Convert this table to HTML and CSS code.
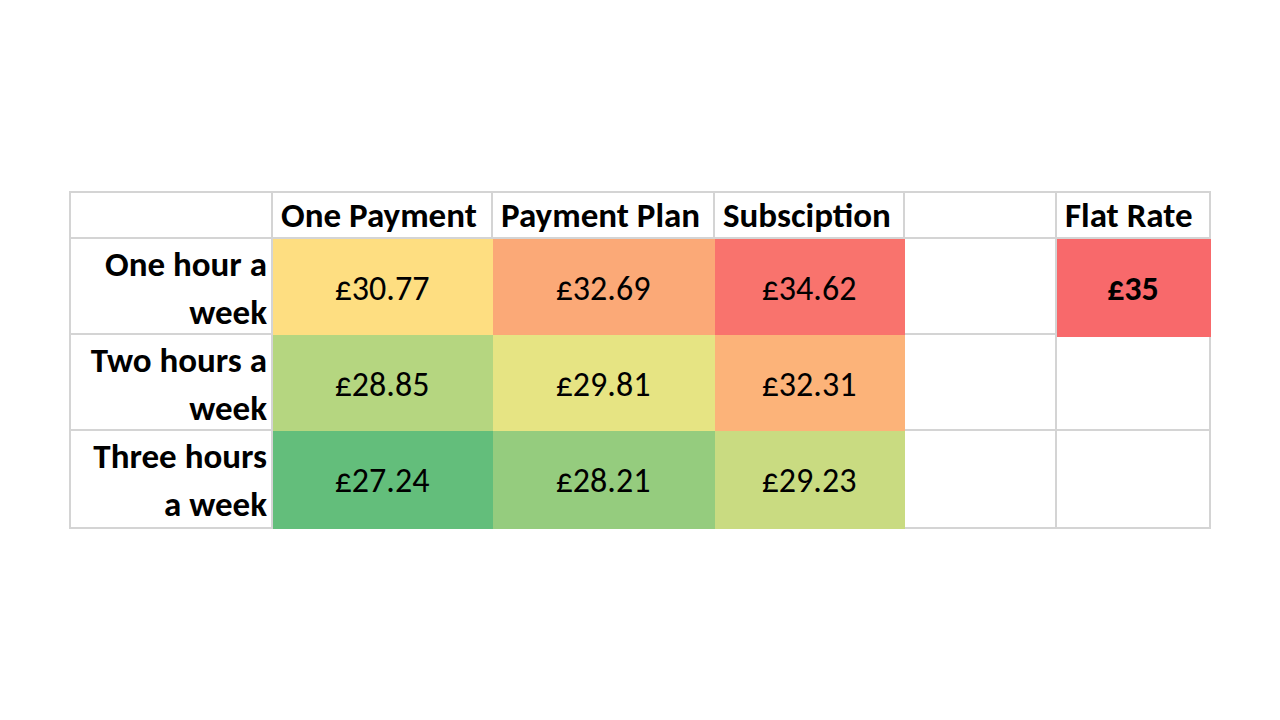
FILE: index.html
```html
<!DOCTYPE html>
<html lang="en">
<head>
<meta charset="utf-8">
<title>Pricing comparison</title>
<link rel="stylesheet" href="styles.css">
</head>
<body>
<div class="slide">
  <div class="grid">
    <div class="cell"></div>
    <div class="cell head">One Payment</div>
    <div class="cell head">Payment Plan</div>
    <div class="cell head">Subsciption</div>
    <div class="cell head"></div>
    <div class="cell head">Flat Rate</div>

    <div class="cell label">One hour a<br>week</div>
    <div class="cell num c-3077">£30.77</div>
    <div class="cell num c-3269">£32.69</div>
    <div class="cell num c-3462">£34.62</div>
    <div class="cell"></div>
    <div class="cell num bold c-35">£35</div>

    <div class="cell label">Two hours a<br>week</div>
    <div class="cell num c-2885">£28.85</div>
    <div class="cell num c-2981">£29.81</div>
    <div class="cell num c-3231">£32.31</div>
    <div class="cell"></div>
    <div class="cell"></div>

    <div class="cell label">Three hours<br>a week</div>
    <div class="cell num c-2724">£27.24</div>
    <div class="cell num c-2821">£28.21</div>
    <div class="cell num c-2923">£29.23</div>
    <div class="cell"></div>
    <div class="cell"></div>
  </div>
</div>
</body>
</html>
```
FILE: styles.css
```css
* { box-sizing: border-box; }
html, body { margin: 0; padding: 0; background: #ffffff; }
.slide {
  width: 1280px;
  height: 720px;
  padding: 191px 0 0 69px;
  font-family: "Carlito", "Lato", "Liberation Sans", sans-serif;
  color: #000;
}
.grid {
  display: grid;
  width: max-content;
  grid-template-columns: 202px 220px 222px 190px 152px 154px;
  grid-template-rows: 46px 96px 96px 98px;
  border-left: 2px solid #d4d4d4;
  border-top: 2px solid #d4d4d4;
}
.cell {
  border-right: 2px solid #d4d4d4;
  border-bottom: 2px solid #d4d4d4;
  font-size: 34px;
  white-space: nowrap;
}
.head {
  font-size: 35px;
  font-weight: 700;
  line-height: 44px;
  padding-left: 8px;
}
.label {
  font-size: 35px;
  font-weight: 700;
  text-align: right;
  line-height: 48px;
  padding: 1px 4px 0 0;
}
.num {
  text-align: center;
  line-height: 48px;
  padding-top: 26px;
}
.bold { font-weight: 700; }
.c-3077 { background: #fede81; border-color: #fede81; }
.c-3269 { background: #fba977; border-color: #fba977; }
.c-3462 { background: #f9736d; border-color: #f9736d; }
.c-35   { background: #f8696b; border-color: #f8696b; box-shadow: 0 2px 0 #f8696b; position: relative; }
.c-2885 { background: #b5d680; border-color: #b5d680; }
.c-2981 { background: #e6e483; border-color: #e6e483; }
.c-3231 { background: #fcb379; border-color: #fcb379; }
.c-2724 { background: #63be7b; border-color: #63be7b; }
.c-2821 { background: #95cc7e; border-color: #95cc7e; }
.c-2923 { background: #c9db81; border-color: #c9db81; }
```
